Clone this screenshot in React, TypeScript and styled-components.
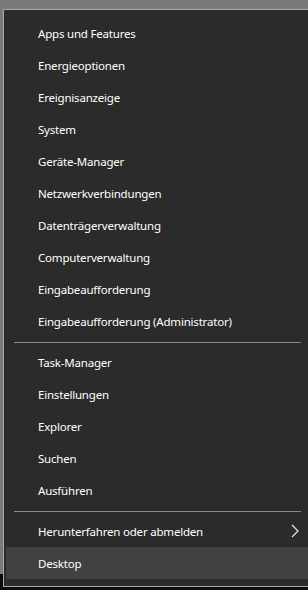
import * as React from "react";
import styled, { createGlobalStyle } from "styled-components";

const GlobalStyle = createGlobalStyle`
  html, body {
    margin: 0;
    padding: 0;
    overflow: hidden;
  }
  body {
    width: 308px;
    height: 590px;
    background: linear-gradient(#7a7a7a 0, #7a7a7a 574px, #0c0c0c 574px);
    font-family: "Noto Sans", "Segoe UI", sans-serif;
  }
`;

const Screen = styled.div`
  padding: 9px 0 0 3px;
`;

const Menu = styled.nav`
  width: 307px;
  box-sizing: content-box;
  border: 1px solid #a8a8a8;
  background: #2b2b2b;
  padding: 7px 0;
  display: flex;
  flex-direction: column;
`;

const Item = styled.div<{ $hover?: boolean }>`
  height: 32px;
  margin: 0 2px;
  padding: 0 10px 0 32px;
  display: flex;
  align-items: center;
  justify-content: space-between;
  color: #ffffff;
  font-size: 11.5px;
  letter-spacing: -0.2px;
  background: ${(p) => (p.$hover ? "#414141" : "transparent")};
`;

const Separator = styled.div`
  height: 1px;
  margin: 5px 10px 3px;
  background: #8a8a8a;
`;

const Chevron = () => (
  <svg width="8" height="14" viewBox="0 0 8 14">
    <path d="M1 1 L7 7 L1 13" fill="none" stroke="#e8e8e8" strokeWidth="1.2" />
  </svg>
);

const groups: string[][] = [
  [
    "Apps und Features",
    "Energieoptionen",
    "Ereignisanzeige",
    "System",
    "Geräte-Manager",
    "Netzwerkverbindungen",
    "Datenträgerverwaltung",
    "Computerverwaltung",
    "Eingabeaufforderung",
    "Eingabeaufforderung (Administrator)",
  ],
  ["Task-Manager", "Einstellungen", "Explorer", "Suchen", "Ausführen"],
];

export default function App() {
  return (
    <Screen>
      <GlobalStyle />
      <Menu>
        {groups.map((group, i) => (
          <React.Fragment key={i}>
            {group.map((label) => (
              <Item key={label}>{label}</Item>
            ))}
            <Separator />
          </React.Fragment>
        ))}
        <Item>
          Herunterfahren oder abmelden
          <Chevron />
        </Item>
        <Item $hover>Desktop</Item>
      </Menu>
    </Screen>
  );
}
